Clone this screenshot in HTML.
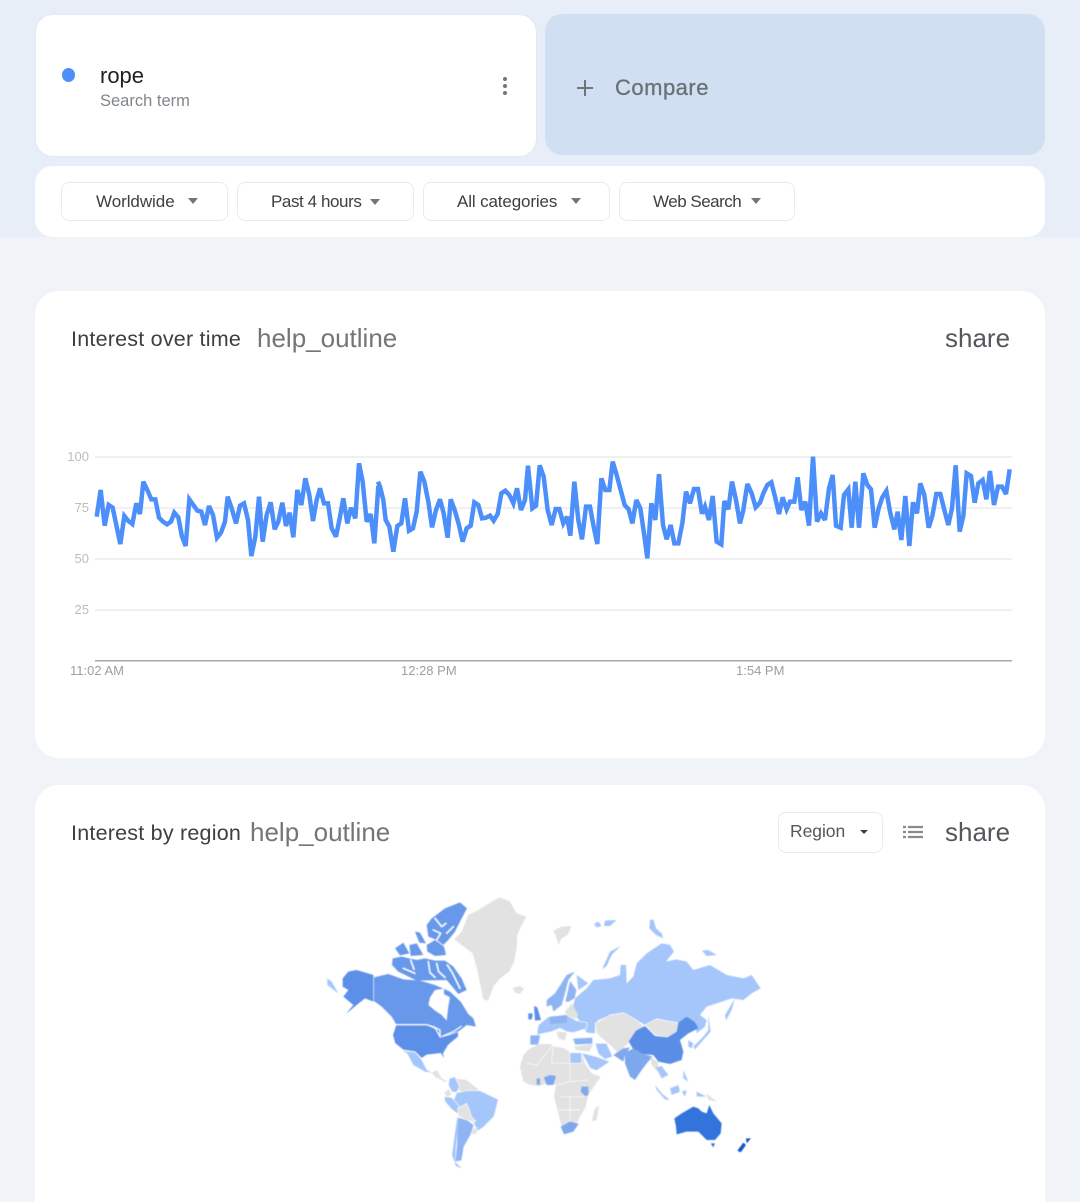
<!DOCTYPE html>
<html lang="en">
<head>
<meta charset="utf-8">
<title>rope - Explore</title>
<style>
html,body{margin:0;padding:0;height:1202px;overflow:hidden}
body{width:1080px;background:#f0f4f9;font-family:"Liberation Sans",sans-serif}
#w{position:relative;width:1080px;height:1202px;overflow:hidden}
.a{position:absolute;white-space:nowrap}
.card{position:absolute;background:#fff}
.chip{position:absolute;top:182px;height:37px;background:#fff;border:1px solid #e8eaed;border-radius:8px}
.chip span{position:absolute;top:8px;font-size:17px;line-height:21px;color:#3c4043;white-space:nowrap}
.tri{position:absolute;width:0;height:0;border-left:5px solid transparent;border-right:5px solid transparent;border-top:6px solid #757575}
.h{font-size:21.5px;line-height:26px;color:#3c4043;letter-spacing:.22px}
.ic{font-size:26px;line-height:32px;color:#5f6368}
</style>
</head>
<body>
<div id="w">
<div class="a" style="left:0;top:0;width:1080px;height:237px;background:#e8eef7"></div>

<div class="card" style="left:36px;top:15px;width:500px;height:141px;border-radius:17px;box-shadow:0 0 0 1px #e4e9f1"></div>
<div class="a" style="left:62px;top:68px;width:13px;height:14px;border-radius:50%;background:#4c8ffb"></div>
<div class="a" style="left:100px;top:63px;font-size:22px;line-height:26px;color:#202124">rope</div>
<div class="a" style="left:100px;top:91px;font-size:16.5px;line-height:21px;color:#80868b">Search term</div>
<div class="a" style="left:503px;top:77px;width:4px;height:4px;border-radius:50%;background:#757575"></div>
<div class="a" style="left:503px;top:84px;width:4px;height:4px;border-radius:50%;background:#757575"></div>
<div class="a" style="left:503px;top:91px;width:4px;height:4px;border-radius:50%;background:#757575"></div>

<div class="a" style="left:545px;top:14px;width:500px;height:141px;border-radius:17px;background:#d0dff2"></div>
<svg class="a" style="left:576px;top:79px" width="18" height="18"><path d="M1 9H17M9 1V17" stroke="#6f7479" stroke-width="2" fill="none"/></svg>
<div class="a" style="left:615px;top:74px;font-size:22px;line-height:28px;color:#6b7075;letter-spacing:.5px;-webkit-text-stroke:.3px #6b7075">Compare</div>

<div class="card" style="left:35px;top:166px;width:1010px;height:71px;border-radius:18px"></div>
<div class="chip" style="left:61px;width:165px"><span style="left:34px;letter-spacing:-.05px">Worldwide</span><i class="tri" style="left:126px;top:15px"></i></div>
<div class="chip" style="left:237px;width:175px"><span style="left:33px;letter-spacing:-.42px">Past 4 hours</span><i class="tri" style="left:132px;top:16px"></i></div>
<div class="chip" style="left:423px;width:185px"><span style="left:33px;letter-spacing:-.13px">All categories</span><i class="tri" style="left:147px;top:15px"></i></div>
<div class="chip" style="left:619px;width:174px"><span style="left:33px;letter-spacing:-.5px">Web Search</span><i class="tri" style="left:131px;top:15px"></i></div>

<div class="card" style="left:35px;top:291px;width:1010px;height:467px;border-radius:24px"></div>
<div class="a h" style="left:71px;top:326px">Interest over time</div>
<div class="a ic" style="left:257px;top:322px;color:#757575">help_outline</div>
<div class="a ic" style="left:945px;top:322px;color:#54585c">share</div>

<div class="a" style="left:60px;top:450px;width:29px;text-align:right;font-size:13px;line-height:14px;color:#bdbdbd">100</div>
<div class="a" style="left:60px;top:501px;width:29px;text-align:right;font-size:13px;line-height:14px;color:#bdbdbd">75</div>
<div class="a" style="left:60px;top:552px;width:29px;text-align:right;font-size:13px;line-height:14px;color:#bdbdbd">50</div>
<div class="a" style="left:60px;top:603px;width:29px;text-align:right;font-size:13px;line-height:14px;color:#bdbdbd">25</div>
<div class="a" style="left:70px;top:664px;font-size:13px;line-height:14px;color:#9e9e9e">11:02 AM</div>
<div class="a" style="left:401px;top:664px;font-size:13px;line-height:14px;color:#9e9e9e">12:28 PM</div>
<div class="a" style="left:736px;top:664px;font-size:13px;line-height:14px;color:#9e9e9e">1:54 PM</div>

<svg class="a" style="left:0;top:0" width="1080" height="700">
<defs><clipPath id="c"><rect x="90" y="456" width="922" height="205"/></clipPath></defs>
<path d="M95 457H1012M95 508H1012M95 559H1012M95 610H1012" stroke="#ebebeb" stroke-width="1.5" fill="none"/>
<path d="M95 660.8H1012" stroke="#a8a8a8" stroke-width="1.5" fill="none"/>
<g clip-path="url(#c)" fill="none" stroke="#4c8ffa" stroke-width="13.5" stroke-linejoin="miter" stroke-miterlimit="3">
<polyline transform="translate(60,440) scale(.33333)" points="110,230 122,150 134,257 146,195 158,203 170,260 181,312 193,228 205,243 217,252 229,190 240,222 250,125 262,150 274,178 286,178 297,233 309,245 321,253 333,245 343,218 355,232 366,290 377,318 388,178 400,195 412,212 424,215 435,255 447,198 459,225 471,293 483,278 495,245 503,170 516,208 528,250 540,197 552,190 564,240 574,348 586,290 597,170 608,305 620,225 632,187 644,268 655,245 667,188 678,258 689,218 700,292 712,150 724,195 736,115 748,165 759,243 770,180 780,145 792,190 804,190 815,265 828,290 840,230 850,175 862,250 873,203 886,235 897,70 908,125 920,245 932,222 943,310 955,138 960,150"/>
<polyline transform="translate(380,440) scale(.33333)" points="-6,125 0,140 10,180 17,240 28,260 40,335 52,258 64,250 75,175 87,272 99,265 110,215 121,95 133,125 145,185 156,262 168,210 180,178 191,220 203,293 212,178 224,210 237,255 248,305 260,265 272,257 283,187 295,195 306,235 318,233 330,227 341,242 353,222 364,160 376,152 388,165 400,190 411,145 423,210 435,180 444,77 457,205 468,197 479,76 491,110 503,210 515,255 527,207 538,207 550,250 561,230 571,287 583,125 595,240 606,298 618,200 630,200 641,260 652,312 664,115 676,150 688,150 698,65 710,105 722,150 734,195 746,208 757,250 769,180 781,205 792,280 802,355 814,190 826,240 837,102 849,255 860,298 872,255 883,310 895,310 907,250 918,155 930,190 942,147 954,147 966,222"/>
<polyline transform="translate(700,440) scale(.33333)" points="6,222 15,200 27,240 38,168 50,305 64,313 73,183 85,208 96,125 108,180 120,250 130,210 142,132 155,160 167,202 180,188 190,160 202,135 214,127 225,170 237,222 248,172 260,208 270,185 283,185 293,112 304,210 316,185 327,257 339,50 351,245 363,220 375,240 387,145 398,105 408,257 422,263 432,165 445,148 455,263 466,125 477,263 490,100 502,135 513,148 524,263 536,205 547,172 559,153 570,215 583,268 593,215 604,300 616,168 628,318 639,187 651,220 661,130 673,165 686,263 697,228 709,162 721,162 733,210 745,255 756,205 767,76 779,275 790,228 800,100 813,108 824,188 835,130 848,120 859,178 870,93 882,195 894,140 906,140 918,162 929,88"/>
</g>
</svg>

<div class="card" style="left:35px;top:785px;width:1010px;height:417px;border-radius:24px 24px 0 0"></div>
<div class="a h" style="left:71px;top:820px">Interest by region</div>
<div class="a ic" style="left:250px;top:816px;color:#757575">help_outline</div>
<div class="a" style="left:778px;top:812px;width:103px;height:39px;background:#fff;border:1px solid #e8eaed;border-radius:8px"></div>
<div class="a" style="left:790px;top:821px;font-size:17.5px;line-height:21px;color:#54585c;letter-spacing:-.05px">Region</div>
<i class="tri" style="left:860px;top:830px;border-left-width:4px;border-right-width:4px;border-top-width:4px;border-top-color:#3c4043"></i>
<svg class="a" style="left:903px;top:825px" width="21" height="15"><path d="M0 2H3M5 2H20M0 7H3M5 7H20M0 12H3M5 12H20" stroke="#8a8a8a" stroke-width="2.2" fill="none"/></svg>
<div class="a ic" style="left:945px;top:816px;color:#54585c">share</div>

<svg class="a" style="left:0;top:0;filter:blur(.45px)" width="1080" height="1202">
<g transform="translate(320,890) scale(.33333)" stroke="#fff" stroke-width="2" stroke-linejoin="round">
<!-- Greenland -->
<path fill="#e2e2e2" stroke="none" d="M403 148 425 125 445 75 475 60 515 35 540 22 570 35 590 70 618 80 605 105 592 135 590 175 582 215 568 245 540 265 520 290 505 332 490 328 482 290 472 240 458 190 425 165Z"/>
<path fill="#e2e2e2" stroke="none" d="M578 294 600 288 612 296 600 312 585 308Z"/>
<!-- Canadian arctic -->
<g fill="#6898ea" stroke="none">
<path d="M335 85 375 55 420 37 441 55 425 85 405 125 385 150 370 165 350 150 325 140 320 105Z"/>
<path d="M225 175 250 158 268 190 240 196Z"/>
<path d="M285 125 300 128 318 160 298 158Z"/>
<path d="M268 165 290 160 310 195 272 198Z"/>
<path d="M320 165 345 150 372 170 378 195 345 198 322 185Z"/>
<path d="M218 205 245 200 290 210 315 205 345 212 375 212 400 230 425 265 440 300 415 312 380 270 290 272 235 245 216 225Z"/>
</g>
<g fill="none" stroke="#fff" stroke-width="5" stroke-linecap="round">
<path d="M345 85 365 110 378 100M340 120 362 130 350 150M380 130 400 110"/>
<path d="M272 210 282 238M325 215 330 248 345 262M350 220 356 245 375 262M382 225 398 250 420 295M250 235 285 250"/>
</g>
<!-- Alaska -->
<path fill="#5c8fe8" stroke="none" d="M68 265 85 245 110 240 160 255 160 335 135 325 110 345 78 372 100 345 70 320 85 300 68 290Z"/>
<path fill="#a5c6fa" stroke="none" d="M22 265 35 275 55 310 35 295 22 285Z"/>
<!-- Canada -->
<path fill="#6898ea" stroke="none" d="M162 335 162 262 205 252 250 268 300 272 345 285 390 305 422 335 445 372 460 385 468 410 440 405 415 425 385 440 365 445 345 410 320 402 228 402 215 380 185 350 165 335Z"/>
<path fill="#fff" stroke="none" d="M325 345 330 322 345 300 372 296 372 312 390 322 385 350 380 392 365 375 345 362Z"/>
<path fill="none" stroke="#fff" stroke-width="4" d="M340 410 360 420 360 440M365 440 400 425 425 408"/>
<!-- USA -->
<path fill="#5c8fe8" d="M228 405 320 405 345 415 360 442 395 432 415 425 415 440 385 465 370 490 375 510 362 490 320 495 305 505 285 485 250 480 225 460 218 435Z"/>
<!-- Mexico -->
<path fill="#a5c6fa" stroke="none" d="M248 483 285 487 305 510 320 540 335 548 315 545 280 525 262 490Z"/>
<!-- Central America -->
<path fill="#e2e2e2" stroke="none" d="M335 548 350 540 365 565 385 575 372 575 345 560Z"/>
<!-- South America -->
<path fill="#e2e2e2" stroke="none" d="M400 565 440 570 478 600 440 606 410 600Z"/>
<path fill="#a5c6fa" d="M388 565 405 560 418 590 410 608 395 605 385 585Z"/>
<path fill="#e2e2e2" stroke="none" d="M373 610 385 596 395 612 382 620Z"/>
<path fill="#a5c6fa" d="M410 608 440 602 480 602 535 628 522 680 490 712 470 725 462 700 445 680 420 652 400 632Z"/>
<path fill="#a5c6fa" d="M372 620 395 622 420 652 413 672 392 655 375 635Z"/>
<path fill="#e2e2e2" d="M413 655 440 640 455 680 468 695 442 692 415 678Z"/>
<path fill="#e2e2e2" d="M450 718 470 712 472 730 458 735Z"/>
<path fill="#8fb4f3" d="M415 682 442 690 462 705 452 735 432 770 425 812 405 815 410 770 412 720Z"/>
<path fill="#a5c6fa" stroke="none" d="M412 680 416 690 408 770 405 815 425 835 408 828 396 795 405 730Z"/>
</g>
<g transform="translate(530,900) scale(.33333)" stroke="#fff" stroke-width="2" stroke-linejoin="round">
<!-- Svalbard and arctic islands -->
<path fill="#e2e2e2" stroke="none" d="M70 92 95 80 125 78 112 105 95 115 85 135 78 110Z"/>
<path fill="#a5c6fa" stroke="none" d="M192 72 205 65 215 78 200 82Z M225 62 260 60 240 78 222 78Z M360 60 370 58 378 85 395 100 400 115 378 105 358 85Z M516 152 535 150 560 165 530 168Z"/>
<path fill="#a5c6fa" stroke="none" d="M216 208 240 155 272 138 245 165 230 198Z"/>
<!-- Russia -->
<path fill="#a5c6fa" stroke="none" d="M130 315 135 295 170 265 190 240 240 235 270 225 272 195 288 195 290 250 310 230 320 190 350 160 395 130 420 135 432 155 408 185 440 178 470 185 490 210 540 195 590 225 640 235 665 225 692 265 665 280 640 300 605 295 560 310 530 320 510 345 530 360 525 380 500 400 497 365 470 350 445 368 410 362 380 355 345 375 320 360 280 338 245 345 205 360 195 375 195 400 170 398 155 370 135 345Z"/>
<path fill="#a5c6fa" stroke="none" d="M585 345 615 295 605 330 588 362Z"/>
<!-- Central Asia, Mongolia -->
<path fill="#e2e2e2" d="M195 370 240 345 280 338 320 360 340 378 320 400 295 430 265 462 245 440 215 415 200 400Z"/>
<path fill="#e2e2e2" d="M345 375 380 356 410 363 445 368 440 395 410 412 375 405Z"/>
<!-- China -->
<path fill="#5a8ee6" stroke="none" d="M296 425 318 392 345 378 375 408 412 412 440 395 445 368 470 350 495 365 505 385 475 400 450 420 460 455 455 480 420 492 385 485 370 465 335 462 310 448Z"/>
<!-- Scandinavia -->
<path fill="#8fb4f3" stroke="none" d="M50 300 75 280 110 225 135 215 115 240 105 280 95 315 70 335 65 315 50 320Z"/>
<path fill="#8fb4f3" d="M105 305 120 240 140 270 135 295 115 307Z"/>
<path fill="#a5c6fa" stroke="none" d="M140 225 175 250 145 270Z"/>
<!-- Europe -->
<path fill="#e2e2e2" stroke="none" d="M105 335 125 310 145 345 130 362 112 355Z"/>
<path fill="#a5c6fa" d="M55 350 110 345 140 362 172 368 170 385 130 398 110 395 90 385 65 395 42 400 20 405 25 375Z"/>
<path fill="#8fb4f3" d="M0 405 32 405 25 435 0 435Z"/>
<path fill="#8fb4f3" stroke="none" d="M60 350 110 345 112 368 60 372Z"/>
<path fill="#5c8fe8" stroke="none" d="M12 318 22 322 33 360 15 362Z M-5 340 8 340 6 358 -5 358Z"/>
<path fill="#e2e2e2" stroke="none" d="M80 395 110 397 105 422 85 415Z"/>
<path fill="#8fb4f3" d="M128 415 188 412 188 432 135 435Z"/>
<!-- Middle east -->
<path fill="#a5c6fa" d="M195 430 230 430 248 470 225 478 205 462Z"/>
<path fill="#e2e2e2" stroke="none" d="M130 440 190 432 178 455 140 450Z"/>
<!-- Africa -->
<path fill="#e2e2e2" stroke="none" d="M-30 500 -20 465 0 445 30 432 60 432 75 440 105 445 120 458 155 458 165 490 185 520 212 530 195 555 175 585 165 625 150 650 140 672 95 680 85 640 72 590 78 555 60 545 30 558 0 555 -20 545Z"/>
<path fill="none" stroke="#fff" stroke-width="2" d="M-10 490 20 495 65 440M65 490 70 430M65 490 120 490 155 490M120 490 120 545 80 555M120 545 175 540M90 590 165 590M85 630 150 630M120 590 120 672"/>
<path fill="#a5c6fa" d="M120 458H155V490H120Z"/>
<path fill="#a5c6fa" d="M155 458 200 470 240 485 200 512 180 505Z"/>
<path fill="#7ea8ee" stroke="none" d="M42 532 60 525 78 528 70 555 50 555Z M20 535H30V554H20Z M155 560H175V585L165 588 152 575Z"/>
<path fill="#7ea8ee" stroke="none" d="M92 680 120 665 146 672 130 695 102 703Z"/>
<path fill="#e2e2e2" stroke="none" d="M195 625 207 618 200 660 185 665Z"/>
<!-- South Asia -->
<path fill="#7ea8ee" stroke="none" d="M285 458 310 445 340 462 368 470 350 490 335 510 315 540 300 530 285 490Z"/>
<path fill="#7ea8ee" stroke="none" d="M250 465 280 445 300 442 285 465 280 485Z"/>
<path fill="#e2e2e2" stroke="none" d="M360 470 385 487 382 515 365 495Z"/>
<path fill="#a5c6fa" stroke="none" d="M378 502 395 498 415 525 395 535Z M375 555 395 580 420 600 405 598 380 570Z M420 565 445 555 450 575 425 585Z M460 510 475 545 460 535Z M455 575 470 570 465 590Z M500 575 530 590 500 590Z"/>
<path fill="#e2e2e2" stroke="none" d="M530 580 560 605 535 600Z"/>
<!-- Japan -->
<path fill="#a5c6fa" stroke="none" d="M535 345 542 395 495 448 490 440 520 410 535 390Z"/>
<path fill="#a5c6fa" stroke="none" d="M475 420 490 430 485 445 475 440Z"/>
<!-- Australia -->
<path fill="#3273dc" stroke="none" d="M433 655 455 640 490 620 505 625 515 635 530 640 538 615 550 640 575 670 572 700 555 720 530 720 505 695 470 695 440 703 438 680Z"/>
<path fill="#3273dc" stroke="none" d="M542 730 555 730 550 742Z"/>
<path fill="#0f55c8" stroke="none" d="M648 715 663 715 650 730Z M640 728 648 735 632 757 622 752Z"/>
</g>
</svg>
</div>
</body>
</html>
